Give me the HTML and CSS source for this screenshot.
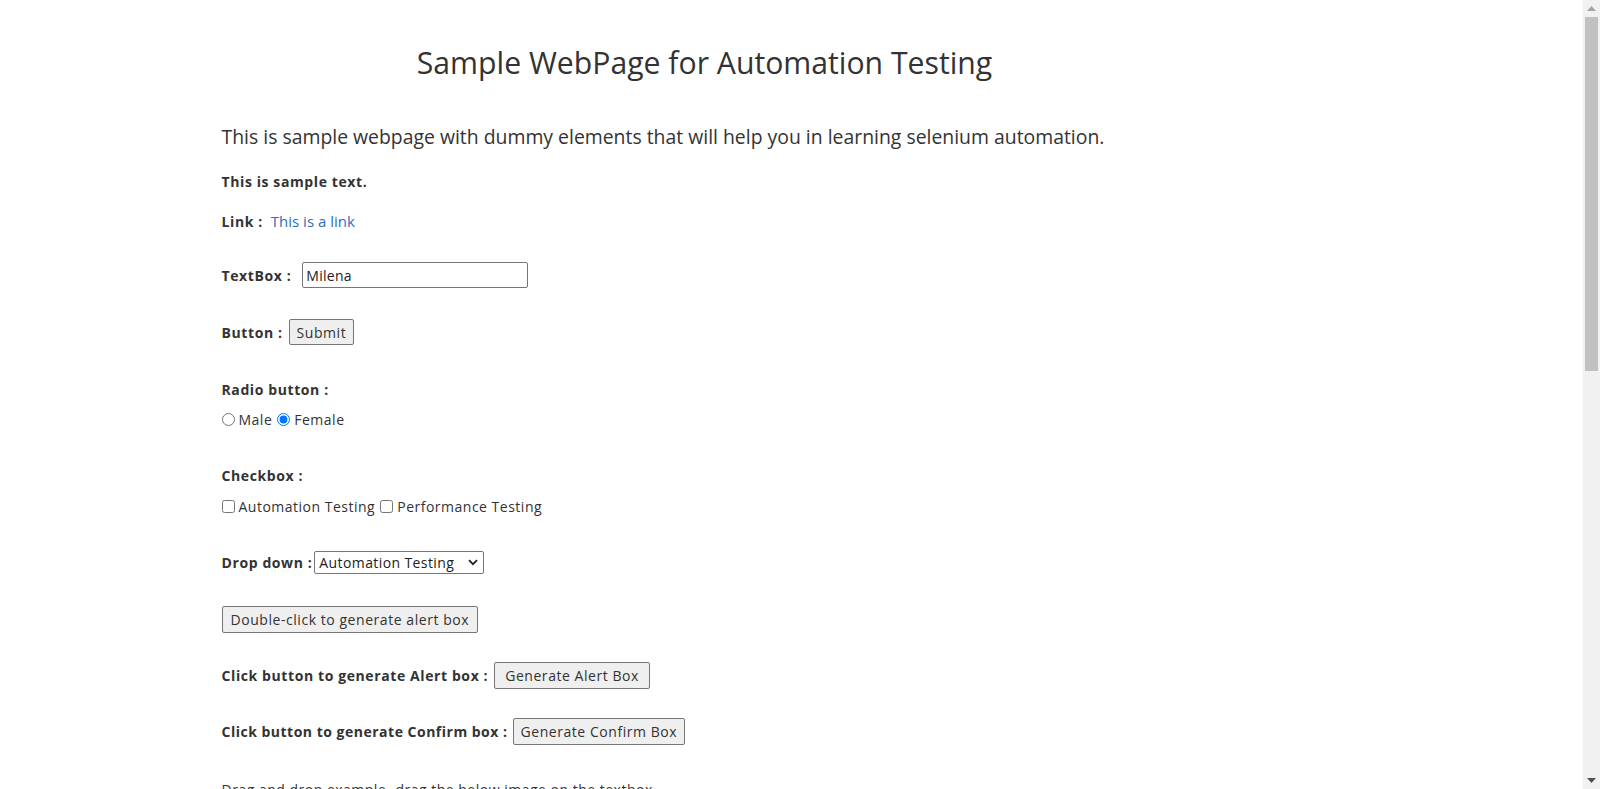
FILE: index.html
```html
<!DOCTYPE html>
<html lang="en">
<head>
<meta charset="utf-8">
<title>Sample WebPage for Automation Testing</title>
<link rel="stylesheet" href="styles.css">
</head>
<body>
<div class="viewport">
  <main class="page">
    <div class="container">
      <div class="title-wrap"><h1 class="title">Sample WebPage for Automation Testing</h1></div>
      <p class="intro">This is sample webpage with dummy elements that will help you in learning selenium automation.</p>
      <div class="row r-sample"><b>This is sample text.</b></div>
      <div class="row r-link"><b>Link :</b><a class="link" href="#">This is a link</a></div>
      <div class="row r-gap1"><b class="wide">TextBox :</b><input class="textbox" type="text" value="Milena"></div>
      <div class="row r-gap2"><b>Button :</b><button class="btn btn-submit" type="button">Submit</button></div>
      <div class="row r-gap2"><b>Radio button :</b></div>
      <div class="row"><label class="opt"><input type="radio" name="sex" class="radio">Male</label><label class="opt"><input type="radio" name="sex" class="radio" checked>Female</label></div>
      <div class="row r-gap3"><b>Checkbox :</b></div>
      <div class="row r-gap4"><label class="opt"><input type="checkbox" class="check">Automation Testing</label><label class="opt"><input type="checkbox" class="check">Performance Testing</label></div>
      <div class="row r-gap3"><b class="tight">Drop down :</b><span class="select-wrap"><select class="select"><option>Automation Testing</option><option>Performance Testing</option><option>Manual Testing</option><option>Database Testing</option></select><svg class="chev" width="10" height="7" viewBox="0 0 10 7"><path d="M1 1.2 L5 5.2 L9 1.2" fill="none" stroke="#222" stroke-width="1.8"/></svg></span></div>
      <div class="row r-gap2"><button class="btn" type="button">Double-click to generate alert box</button></div>
      <div class="row r-gap3"><b>Click button to generate Alert box :</b><button class="btn btn-alert" type="button">Generate Alert Box</button></div>
      <div class="row r-gap3"><b class="confirm-label">Click button to generate Confirm box :</b><button class="btn btn-confirm" type="button">Generate Confirm Box</button></div>
      <div class="row r-gap5"><span class="plain">Drag and drop example- drag the below image on the textbox</span></div>
      <div class="row-auto"><span class="dragbox"></span></div>
      <div class="row-auto"><span class="dropbox"></span></div>
    </div>
  </main>
  <div class="scrollbar">
    <div class="sb-btn"><svg width="9" height="5" viewBox="0 0 9 5"><path d="M4.5 0 L9 5 L0 5 Z" fill="#a3a3a3"/></svg></div>
    <div class="sb-track"><div class="sb-thumb"></div></div>
    <div class="sb-btn"><svg width="9" height="5" viewBox="0 0 9 5"><path d="M0 0 L9 0 L4.5 5 Z" fill="#505050"/></svg></div>
  </div>
</div>
</body>
</html>
```
FILE: styles.css
```css
html, body {
  margin: 0;
  padding: 0;
  height: 789px;
  overflow: hidden;
  background: #fff;
}
body {
  font-family: "Comic Sans MS", "Open Sans", "DejaVu Sans", sans-serif;
  font-size: 14px;
  color: #333;
}
.viewport {
  display: flex;
  height: 789px;
}
.page {
  flex: 1;
  overflow: hidden;
}
.container {
  width: 1140px;
  margin: 0 auto;
  padding: 0 15px;
}
.title-wrap {
  width: 966px;
  text-align: center;
  padding-top: 38px;
}
.title {
  margin: 0;
  height: 50px;
  line-height: 50px;
  font-size: 30.2px;
  font-weight: 400;
}
.intro {
  margin: 34px 0 0;
  height: 30px;
  line-height: 30px;
  font-size: 19.4px;
}
.row {
  display: flex;
  align-items: center;
  height: 30px;
  white-space: nowrap;
}
.row-auto {
  display: flex;
  margin-top: 10px;
}
.row b {
  font-weight: 700;
  letter-spacing: 0.6px;
  margin-right: 6px;
}
.row b.wide { margin-right: 11px; }
.row b.tight { margin-right: 2px; }
.row b.confirm-label { letter-spacing: 0.5px; margin-right: 5px; }
.r-sample { margin-top: 14px; }
.r-link { margin-top: 10px; }
.r-gap1 { margin-top: 24px; }
.r-gap2 { margin-top: 27px; }
.r-gap3 { margin-top: 26px; }
.r-gap4 { margin-top: 1px; }
.r-gap5 { margin-top: 28px; }
.link {
  color: #2a6fbd;
  text-decoration: none;
  font-size: 15px;
  margin-left: 2px;
}
.textbox {
  box-sizing: border-box;
  width: 226px;
  height: 26px;
  border: 1px solid #767676;
  border-radius: 2px;
  padding: 1px 3px;
  font: inherit;
  font-size: 14px;
  letter-spacing: 0.3px;
  color: #222;
}
.btn {
  box-sizing: border-box;
  height: 27px;
  padding: 0 8px;
  background: #efefef;
  border: 1px solid #767676;
  border-radius: 2px;
  font: inherit;
  font-size: 14px;
  letter-spacing: 0.55px;
  color: #333;
}
.btn-submit {
  height: 26px;
  padding: 0 7px;
}
.btn-alert { padding: 0 10px; }
.btn-confirm { padding: 0 7px; }
.opt {
  display: inline-flex;
  align-items: center;
  margin-right: 5px;
  font-size: 14px;
  letter-spacing: 0.5px;
}
.radio, .check {
  margin: 0 4px 0 0;
  width: 13px;
  height: 13px;
}
.plain {
  letter-spacing: 0.5px;
}
.select-wrap {
  position: relative;
  display: inline-block;
}
.select {
  box-sizing: border-box;
  width: 170px;
  height: 23px;
  appearance: none;
  -webkit-appearance: none;
  border: 1px solid #767676;
  border-radius: 2px;
  background: #fff;
  padding: 0 4px;
  font: inherit;
  font-size: 14px;
  letter-spacing: 0.4px;
  color: #222;
}
.chev {
  position: absolute;
  right: 6px;
  top: 8px;
  pointer-events: none;
}
.dragbox {
  display: inline-block;
  width: 100px;
  height: 100px;
  background: #eee;
}
.dropbox {
  display: inline-block;
  width: 200px;
  height: 100px;
  border: 1px solid #aaa;
}
.scrollbar {
  width: 17px;
  background: #f1f1f1;
  display: flex;
  flex-direction: column;
  flex-shrink: 0;
}
.sb-btn {
  height: 17px;
  display: flex;
  align-items: center;
  justify-content: center;
}
.sb-track {
  flex: 1;
  padding: 0 2px;
}
.sb-thumb {
  height: 354px;
  background: #c1c1c1;
}
```
